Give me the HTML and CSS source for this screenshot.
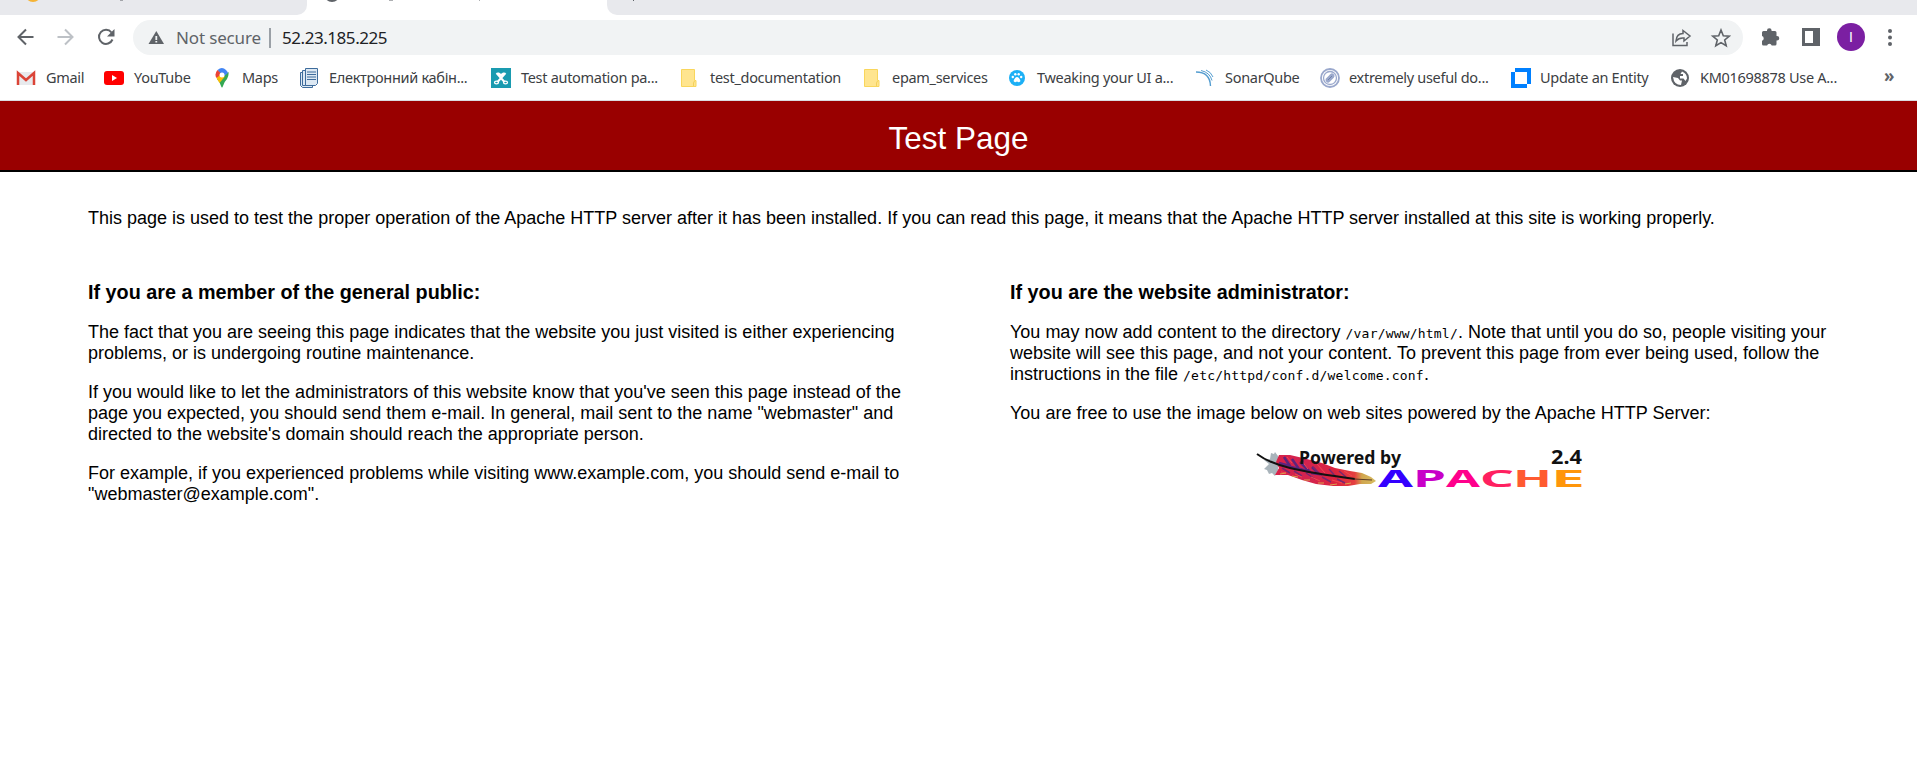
FILE: index.html
```html
<!DOCTYPE html>
<html lang="en">
<head>
<meta charset="utf-8">
<title>Test Page</title>
<link rel="stylesheet" href="styles.css">
</head>
<body>
<div class="tabs"><div class="tab tab-left"><svg width="306" height="15"><circle cx="33" cy="-6" r="8" fill="#f5b335"/><path d="M120 0h3" stroke="#5f6368"/></svg></div><div class="tab-active"><svg width="302" height="15"><circle cx="25" cy="-6" r="8" fill="#5f6368"/><path d="M82 0h4M172 0h1" stroke="#5f6368"/></svg></div><div class="tab tab-right"><svg width="60" height="15"><path d="M26 0h1" stroke="#5f6368" stroke-width="2"/></svg></div></div>
<div class="toolbar">
  <svg class="nav" width="116" height="20" fill="none" stroke="#5f6368" stroke-width="2"><path d="M17.500 10H2.500M10 2.500L2.500 10l7.500 7.500"/><path stroke="#bdc1c6" d="M41.500 10h15M49 2.500l7.500 7.500-7.500 7.500"/><path d="M95.500 5.500A7 7 0 1 0 96.500 12.500"/><path fill="#5f6368" stroke="none" d="M98.500 2v7.500h-7.500z"/></svg>
  <div class="omnibox">
    <svg class="warn" width="17" height="15"><path fill="#5f6368" d="M8.300 1L16 14H.5z"/><path stroke="#f1f3f4" stroke-width="1.800" d="M8.300 6v4M8.300 11v1.500"/></svg>
    <span class="insecure">Not secure</span><i class="sep"></i><span class="url">52.23.185.225</span>
    <svg class="actions" width="60" height="20" fill="none" stroke="#5f6368" stroke-width="1.500"><path d="M2 5.500V17.500h14V14"/><path d="M12 2.500L19 8l-6 5v-3Q8 9.500 5 13q.5-7.500 7-7.500z"/><path stroke-width="1.600" d="M50 2l2.300 5.700 6 .4-4.600 3.900 1.500 5.800-5.200-3.200-5.200 3.200 1.500-5.800-4.600-3.900 6-.4z"/></svg>
  </div>
  <svg class="ext" width="19" height="18"><path fill="#5f6368" d="M1 4.500Q1 3 2.500 3H6V2.500a2.300 2.300 0 0 1 4.600 0V3H14q1.500 0 1.500 1.500V8h.5a2.200 2.200 0 0 1 0 4.500h-.5V16q0 1.500-1.500 1.500h-3.300a2.400 2.400 0 0 0-4.600 0H2.500Q1 17.500 1 16v-3.300a2.400 2.400 0 0 0 0-4.600z"/></svg>
  <svg class="panel" width="18" height="18"><path fill="#5f6368" fill-rule="evenodd" d="M0 0h18v18H0zM3 3v12h8V3z"/></svg>
  <span class="avatar">I</span>
  <svg class="dots" width="6" height="18" fill="#5f6368"><circle cx="3" cy="2" r="2"/><circle cx="3" cy="8.500" r="2"/><circle cx="3" cy="15" r="2"/></svg>
</div>
<div class="bookmarks">
  <a class="b1"><svg width="20" height="20"><path fill="#e8eaed" d="M1 4h18v13H1z"/><path fill="none" stroke="#db4437" stroke-width="2.500" d="M2 17V5l8 7 8-7v12"/></svg><span>Gmail</span></a>
  <a class="b2"><svg width="20" height="20"><rect y="3" width="20" height="14" rx="3" fill="red"/><path fill="#fff" d="M8 7l5 3-5 3z"/></svg><span>YouTube</span></a>
  <a class="b3"><svg width="20" height="20"><path fill="#34a853" d="M2 11Q5 14 6 18q1 3 2 0 1-4 4-7 2-3 1.500-7z"/><path fill="#fbbc04" d="M1.500 10l7-8 1 7-5 6z"/><path fill="#4285f4" d="M2.500 2q4.500-4 8.500 0 1 1 2 3L8 9z"/><path fill="#ea4335" d="M2.500 2l4 4-5 4Q-1 6 2.500 2z"/><circle cx="7" cy="7" r="2.500" fill="#fff"/></svg><span>Maps</span></a>
  <a class="b4"><svg width="20" height="20" fill="#dce8f3" stroke="#3e6c9c"><path d="M.5 4.500h12v15h-10l-2-2z"/><path d="M2.500 2.500h12v15h-12z"/><path d="M5.500.5h12v15l-2 2h-10z"/><path d="M7 4h9M7 6.500h9M7 9h9M7 11.500h9"/></svg><span>Електронний кабін...</span></a>
  <a class="b5"><svg width="20" height="20"><path fill="#1a9bb0" d="M0 0h20v20H0z"/><g fill="none" stroke="#fff" stroke-width="2"><path d="M5.500 5l8 9M14.500 5l-8 9M7 5l3 2 3-2"/><ellipse cx="5.500" cy="14.500" rx="2" ry="1.300" stroke-width="1.300"/><ellipse cx="14.500" cy="14.500" rx="2" ry="1.300" stroke-width="1.300"/></g></svg><span>Test automation pa...</span></a>
  <a class="b6"><svg width="17" height="20"><path fill="#ffe58f" stroke="#f9d65c" d="M.5 1.500h13v11h1.500v6H.5z"/><path fill="none" stroke="#f3d05a" d="M12.500 18v-3l1-2"/></svg><span>test_documentation</span></a>
  <a class="b7"><svg width="17" height="20"><path fill="#ffe58f" stroke="#f9d65c" d="M.5 1.500h13v11h1.500v6H.5z"/><path fill="none" stroke="#f3d05a" d="M12.500 18v-3l1-2"/></svg><span>epam_services</span></a>
  <a class="b8"><svg width="16" height="20"><circle cx="8" cy="10" r="8" fill="#1cb0f6"/><g fill="#fff"><path d="M8 9q2 0 3.500 4-1 2-3.500.5Q5.500 15 4.500 13 6 9 8 9z"/><circle cx="3.800" cy="9" r="1.200"/><circle cx="6.300" cy="6.300" r="1.200"/><circle cx="9.700" cy="6.300" r="1.200"/><circle cx="12.200" cy="9" r="1.200"/></g></svg><span>Tweaking your UI a...</span></a>
  <a class="b9"><svg width="18" height="20" fill="none" stroke="#549dd0"><path stroke-width="1.400" d="M0 4q14 0 14.500 14"/><path d="M5 2.500q9 2 11 10M10 2q5 2 7 7"/></svg><span>SonarQube</span></a>
  <a class="b10"><svg width="20" height="20" fill="none" stroke="#9aa8cc"><circle cx="10" cy="10" r="9" stroke-width="1.800"/><circle cx="10" cy="10" r="6.500" stroke-width="1.300"/><path stroke-width="5" stroke-linecap="round" d="M8 12l4-4"/><path stroke="#7182aa" d="M8 12l4-4"/></svg><span>extremely useful do...</span></a>
  <a class="b11"><svg width="20" height="20"><path fill="#0080ff" fill-rule="evenodd" d="M4 0h16v16h-4v4H0V4h4zM4 4v12h12V4z"/></svg><span>Update an Entity</span></a>
  <a class="b12"><svg width="18" height="20"><circle cx="9" cy="10" r="9" fill="#5f6368"/><path fill="#fff" d="M2 9l5 1 2 2.500h2L10 17q-7 0-8-8zM11 3.500q5 2 5 7l-1.500 2.500-2-2.500H9V8h3V6H9.500z"/></svg><span>KM01698878 Use A...</span></a>
  <b class="more">»</b>
</div>
<h1>Test Page</h1>
<main>
  <p class="intro">This page is used to test the proper operation of the Apache HTTP server after it has been installed. If you can read this page, it means that the Apache HTTP server installed at this site is working properly.</p>
  <div class="columns">
    <section>
      <h2>If you are a member of the general public:</h2>
      <p>The fact that you are seeing this page indicates that the website you just visited is either experiencing<br>problems, or is undergoing routine maintenance.</p>
      <p>If you would like to let the administrators of this website know that you've seen this page instead of the<br>page you expected, you should send them e-mail. In general, mail sent to the name "webmaster" and<br>directed to the website's domain should reach the appropriate person.</p>
      <p>For example, if you experienced problems while visiting www.example.com, you should send e-mail to<br>"webmaster@example.com".</p>
    </section>
    <section>
      <h2>If you are the website administrator:</h2>
      <p>You may now add content to the directory <code>/var/www/html/</code>. Note that until you do so, people visiting your<br>website will see this page, and not your content. To prevent this page from ever being used, follow the<br>instructions in the file <code>/etc/httpd/conf.d/welcome.conf</code>.</p>
      <p>You are free to use the image below on web sites powered by the Apache HTTP Server:</p>
      <svg class="apache" width="330" height="60" viewBox="1255 440 330 60">
        <defs><linearGradient id="f" x1="0" x2="1"><stop offset="0" stop-color="#d92248"/><stop offset=".3" stop-color="#d32350"/><stop offset=".6" stop-color="#dc243f"/><stop offset=".79" stop-color="#e54040"/><stop offset=".86" stop-color="#d0a54e"/><stop offset="1" stop-color="#d7bd62"/></linearGradient></defs>
        <path fill="#a9b4bb" d="M1271 453l3 1 1-2 3 4v14l-3 6-3-3-3 1-2-4-3-1 5-5-5-4 6-1z"/>
        <path fill="url(#f)" d="M1279 455L1290 455L1303 458L1322 463L1335 468L1350 471L1362 473L1371 477L1376 481L1371 484L1360 484L1348 486L1333 486L1316 484L1302 480L1288 475L1275 475L1279 468L1276 462Z"/>
        <path fill="none" stroke="#5c247e" stroke-width="2.500" d="M1279 463l11 3-6-9M1291 467l8 2-7-10M1300 469l10 3-10-10M1311 473l8 1-7-7"/>
        <path fill="none" stroke="#79286f" stroke-width="1.500" d="M1282 468l8 5M1294 471l8 5M1306 473l9 6M1320 475l-7-8M1336 477l-7-8M1346 477l-7-6M1322 477l9 5M1337 479l8 4"/>
        <path fill="none" stroke="#f24750" d="M1287 457l5 6M1301 460l7 9M1317 464l8 9M1344 471l8 5M1281 472l5 1M1295 474l7 3M1311 477l9 4M1332 480l10 3"/>
        <path fill="none" stroke="#dda24c" d="M1280 474l6-1M1292 476l6 1M1304 480l6 0M1318 483l6 0M1330 485l7-1M1345 484l6-1"/>
        <path fill="none" stroke="#111" stroke-width="2" d="M1257 454Q1269 463 1290 468T1355 479"/>
        <path fill="none" stroke="#5a3a25" d="M1354 479L1372 480"/>
        <g font-family="Noto Sans" font-weight="700" fill="#111"><text x="1299" y="464" font-size="18" textLength="102" lengthAdjust="spacingAndGlyphs">Powered by</text><text x="1551" y="464" font-size="19" textLength="31" lengthAdjust="spacingAndGlyphs">2.4</text></g>
        <g font-family="Noto Sans" font-weight="700" font-size="24"><text x="1378" y="487" textLength="35" lengthAdjust="spacingAndGlyphs" fill="#3300ff">A</text><text x="1413" y="487" textLength="33" lengthAdjust="spacingAndGlyphs" fill="#c800c8">P</text><text x="1446" y="487" textLength="34" lengthAdjust="spacingAndGlyphs" fill="#ff008c">A</text><text x="1480" y="487" textLength="34" lengthAdjust="spacingAndGlyphs" fill="#ff2060">C</text><text x="1513" y="487" textLength="39" lengthAdjust="spacingAndGlyphs" fill="#ff5a30">H</text><text x="1551" y="487" textLength="34" lengthAdjust="spacingAndGlyphs" fill="#ff960a">E</text></g>
      </svg>
    </section>
  </div>
</main>
</body>
</html>
```
FILE: styles.css
```css
*{box-sizing:border-box}
body{margin:0;height:784px;overflow:hidden;background:#fff;color:#000;font:18px/21px "Liberation Sans",Arial,sans-serif}
svg{display:block;flex:none}
.tabs{height:15px;display:flex;background:#fff}
.tab{background:#e8e9ed;height:15px;overflow:hidden}
.tab-left{width:307px;border-bottom-right-radius:10px}
.tab-active{width:300px;background:#fff;overflow:hidden}
.tab-right{flex:1;border-bottom-left-radius:10px}
.toolbar{height:45px;padding-top:5px;display:flex;align-items:flex-start;font-family:"Noto Sans",sans-serif}
.nav{margin:7px 0 0 16px}
.omnibox{margin-left:1px;width:1610px;height:35px;border-radius:18px;background:#f1f3f4;display:flex;align-items:center;font-size:17px;white-space:nowrap;color:#202124}
.warn{margin-left:15px}
.insecure{width:83px;margin-left:11px;color:#5f6368;letter-spacing:-.15px}
.sep{width:2px;height:20px;background:#9aa0a6;margin:0 11px 0 10px}
.url{width:110px;letter-spacing:-.45px}
.actions{margin-left:auto;margin-right:12px}
.ext{margin:8px 0 0 18px}
.panel{margin:8px 0 0 22px}
.avatar{width:28px;height:28px;margin:3px 0 0 17px;border-radius:50%;background:#7b1fa2;color:#fff;font:14px/28px "Liberation Sans",sans-serif;text-align:center}
.dots{margin:9px 0 0 22px}
.bookmarks{height:41px;border-bottom:1px solid #dadce0;display:grid;grid-template-columns:16px 88px 111px 85px 191px 190px 183px 145px 187px 124px 191px 160px 217px 1fr;align-items:center;font:14.5px/20px "Noto Sans",sans-serif;letter-spacing:-.3px;color:#3c4043;padding-bottom:5px}
.bookmarks a{display:flex;align-items:center;white-space:nowrap}
.b1{grid-column:2}
.bookmarks span{margin:-2px 0 0 10px}
.b3 span{margin-left:7px}
.b4 span{margin-left:9px}
.b6 span{margin-left:12px}
.b7 span,.b9 span,.b12 span{margin-left:11px}
.b8 span{margin-left:12px}
.b10 span,.b11 span{margin-left:9px}
.more{font-size:17px;margin:-4px 0 0 -4px;color:#5f6368}
h1{height:71px;margin:0;background:#900;border-bottom:2px solid #000;color:#fff;font-size:31.5px;font-weight:400;line-height:75px;text-align:center}
main{padding:0 88px}
.intro{margin:36px 0 52px;white-space:nowrap}
.columns{display:grid;grid-template-columns:922px 1fr}
h2{font-size:19.8px;line-height:23px;margin:0 0 18px}
p{margin:0 0 18px;white-space:nowrap}
code{font-family:"DejaVu Sans Mono",monospace;font-size:13px;line-height:1;letter-spacing:.2px}
.apache{margin:-2px 0 0 245px}
```
